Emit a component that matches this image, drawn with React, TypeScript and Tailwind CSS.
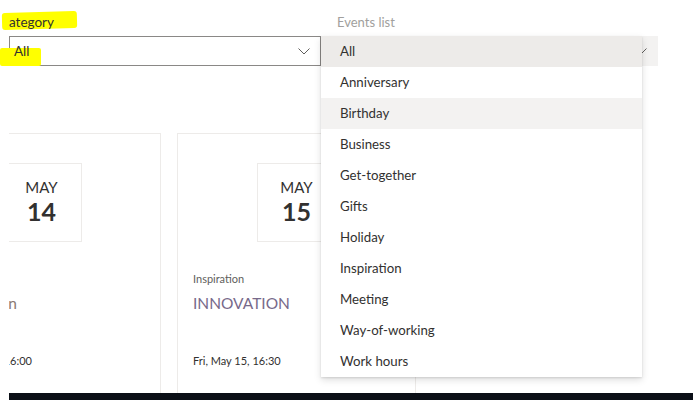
import React from 'react'

const options = ['All', 'Anniversary', 'Birthday', 'Business', 'Get-together', 'Gifts', 'Holiday', 'Inspiration', 'Meeting', 'Way-of-working', 'Work hours']

const Chevron = () => (
  <svg width="12" height="7" viewBox="0 0 12 7" fill="none">
    <path d="M0.5 0.5 L6 6 L11.5 0.5" stroke="#605e5c" strokeWidth="1" />
  </svg>
)

const EventCard = ({month, day, category, title, titleColor, when}:
  {month: string, day: string, category: string, title: string, titleColor: string, when: string}) => {
  return (
    <div className='w-[239px] h-[300px] shrink-0 border border-[#edebe9] bg-white'>
      <div className='mx-auto mt-[29px] w-[80px] h-[79px] border border-[#edebe9] flex flex-col items-center justify-center'>
        <span className='text-[15px] leading-[16px] text-[#323130]'>{month}</span>
        <span className='text-[25px] leading-[32px] font-bold text-[#323130]'>{day}</span>
      </div>
      <div className='px-[15px] mt-[29px]'>
        <div className='text-[11px] leading-[16px] text-[#605e5c]'>{category}</div>
        <div className={`mt-[5px] text-[15.5px] leading-[22px] whitespace-nowrap ${titleColor}`}>{title}</div>
        <div className='mt-[39px] text-[11px] leading-[16px] text-[#323130] whitespace-nowrap'>{when}</div>
      </div>
    </div>
  )
}

export default function App() {
  return (
    <div className="relative w-[693px] h-[400px] overflow-hidden bg-white font-['Lato',sans-serif] text-[#323130]">
      <div className='h-[393px] pl-[9px]'>
        {/* filters */}
        <div className='flex pt-[10px]'>
          <div className='w-[312px]'>
            <div className='relative h-[24px] text-[13.5px] leading-[24px]'>
              <div className='absolute left-[-7px] top-[2px] w-[75px] h-[17px] bg-[#ffff00] rounded-[3px] -rotate-[1.5deg]' />
              <span className='relative'>ategory</span>
            </div>
            <div className='relative mt-[2px] h-[30px] border border-[#8a8886] flex items-center justify-between pl-[4px] pr-[10px]'>
              <div className='absolute left-[-10px] top-[11px] w-[41px] h-[18px] bg-[#ffff00] rounded-[2px]' />
              <span className='relative text-[13.5px]'>All</span>
              <Chevron />
            </div>
          </div>
          <div className='w-[337px]'>
            <div className='h-[24px] pl-[16px] text-[13px] leading-[24px] text-[#a19f9d]'>Events list</div>
            <div className='mt-[2px] h-[30px] bg-[#f3f2f1] flex items-center justify-end pr-[11px]'>
              <Chevron />
            </div>
          </div>
        </div>

        {/* cards */}
        <div className='mt-[67px] h-[260px] overflow-hidden'>
          <div className='flex gap-4 ml-[-87px]'>
            <EventCard month='MAY' day='14' category='Inspiration' title='Celebration' titleColor='text-[#8a7a72]' when='Thu, May 14, 16:00' />
            <EventCard month='MAY' day='15' category='Inspiration' title='INNOVATION' titleColor='text-[#77698a]' when='Fri, May 15, 16:30' />
          </div>
        </div>
      </div>
      <div className='ml-[9px] h-[7px] bg-[#0b0f17]' />

      {/* open dropdown menu */}
      <div className='absolute left-[321px] top-[36px] w-[321px] bg-white shadow-[0_3.2px_7.2px_rgba(0,0,0,0.132),0_0.6px_1.8px_rgba(0,0,0,0.108)]'>
        {options.map((o, i) => (
          <div key={o} className={`h-[31px] px-[19px] pt-[1px] flex items-center text-[13.25px] ${i === 0 ? 'bg-[#edebe9]' : i === 2 ? 'bg-[#f3f2f1]' : ''}`}>
            {o}
          </div>
        ))}
      </div>
    </div>
  )
}
